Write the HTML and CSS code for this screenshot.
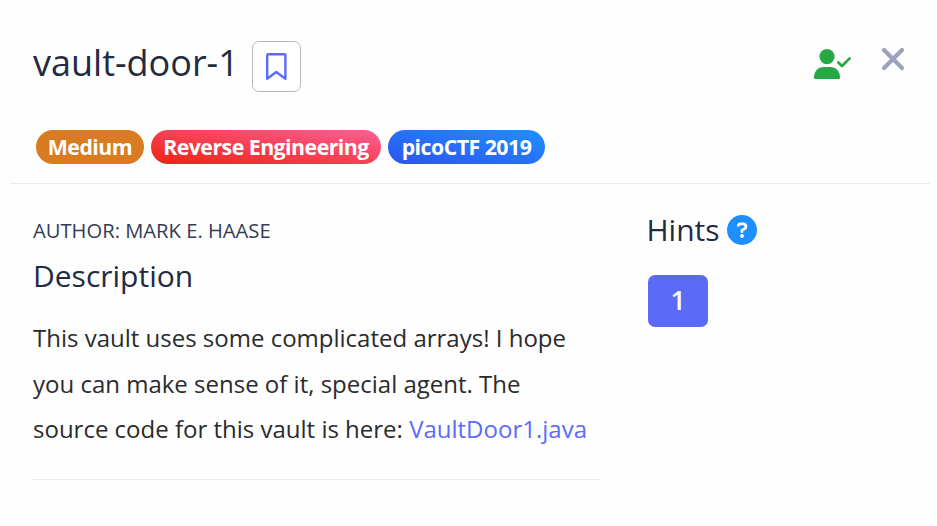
FILE: index.html
```html
<!DOCTYPE html>
<html lang="en">
<head>
<meta charset="utf-8">
<title>vault-door-1</title>
<link rel="stylesheet" href="styles.css">
</head>
<body>
<main class="modal">
  <header class="header">
    <div class="title-row">
      <h1 class="title">vault-door-1</h1>
      <button class="bookmark" aria-label="Bookmark">
        <svg width="21" height="27" viewBox="0 0 21 27"><path d="M1.200 25.800V2.200Q1.200 1.200 2.200 1.200h16.200q1 0 1 1v23.600l-9.100-6.800z" fill="none" stroke="#5b6cfa" stroke-width="2.400" stroke-linejoin="round"/></svg>
      </button>
      <svg class="solved" width="38" height="31" viewBox="0 0 38 31"><circle cx="13" cy="7.6" r="7.6" fill="#28a745"/><path d="M0 28.5C0 21 5 18 10 18h6c5 0 10 3 10 10.500q0 1.500-1.500 1.500h-23Q0 30 0 28.500z" fill="#28a745"/><path d="M24.300 13.500l3.700 3.500 7.600-7.600" fill="none" stroke="#28a745" stroke-width="2.700" stroke-linecap="round" stroke-linejoin="round"/></svg>
      <svg class="close" width="24" height="24" viewBox="0 0 24 24"><path d="M3 3l18 18M21 3L3 21" stroke="#9ca2bd" stroke-width="4.200" stroke-linecap="round"/></svg>
    </div>
    <div class="tags">
      <span class="tag medium">Medium</span>
      <span class="tag category">Reverse Engineering</span>
      <span class="tag event">picoCTF 2019</span>
    </div>
  </header>
  <div class="content">
    <section class="details">
      <p class="author">AUTHOR: MARK E. HAASE</p>
      <h2 class="heading">Description</h2>
      <p class="text">This vault uses some complicated arrays! I hope<br>you can make sense of it, special agent. The<br>source code for this vault is here: <a href="#">VaultDoor1.java</a></p>
    </section>
    <aside class="hints">
      <h2 class="hints-title">Hints
        <svg class="help" width="30" height="30" viewBox="0 0 30 30"><circle cx="15" cy="15" r="15" fill="#1e8fff"/><path d="M11.200 10.200Q11.800 8.800 13.800 8.800h2.400q2.700.2 2.700 2.700 0 1.500-1.500 2.400L15 15.300v1.400" fill="none" stroke="#fff" stroke-width="2.800" stroke-linecap="round" stroke-linejoin="round"/><circle cx="15" cy="21" r="1.900" fill="#fff"/></svg>
      </h2>
      <button class="hint">1</button>
    </aside>
  </div>
</main>
</body>
</html>
```
FILE: styles.css
```css
* { box-sizing: border-box; }
body { margin: 0; background: #fefefe; color: #2a2b2d; font-family: "Open Sans", sans-serif; }
h1, h2, p { margin: 0; font-weight: 400; }
.modal { height: 526px; overflow: hidden; }
.header { height: 184px; margin: 0 7px 0 10px; padding: 41px 26px 0 23px; border-bottom: 1px solid #e9eaec; }
.title-row { display: flex; height: 51px; }
.title { width: 219px; font-size: 36px; line-height: 44px; color: #222b42; white-space: nowrap; }
.bookmark { width: 49px; height: 51px; padding: 0; display: grid; place-items: center; background: #fff; border: 1px solid #b2b8c2; border-radius: 7px; }
.bookmark svg { display: block; }
.solved { margin: 8px 0 0 auto; }
.close { margin: 6px -1px 0 29px; }
.tags { display: flex; gap: 7px; margin: 38px 0 0 3px; }
.tag { height: 34px; border-radius: 17px; color: #fff; font-size: 21.3px; font-weight: 700; letter-spacing: -0.52px; line-height: 34px; text-align: center; white-space: nowrap; }
.medium { width: 108px; background: #d97b20; }
.category { width: 230px; background: linear-gradient(to top right, #ee2211, #ff6098); }
.event { width: 157px; background: linear-gradient(to top right, #2d53f2, #1e90fe); }
.content { display: flex; padding-left: 33px; }
.details { width: 568px; height: 296px; padding-top: 31px; border-bottom: 1px solid #e9eaec; }
.author { font-size: 20.2px; line-height: 30px; color: #343b55; white-space: nowrap; }
.heading { margin-top: 11px; font-size: 30px; line-height: 40px; color: #222b42; }
.text { margin-top: 19px; font-size: 24px; line-height: 45.6px; white-space: nowrap; }
.text a { color: #5b6cfa; text-decoration: none; }
.hints { padding: 26px 0 0 45.5px; }
.hints-title { display: flex; gap: 7px; align-items: center; font-size: 30px; line-height: 40px; color: #222b42; }
.hint { display: block; width: 60px; height: 52px; margin: 25px 0 0 1.5px; padding: 0 0 2px; border: 0; border-radius: 7px; background: #5b6af7; color: #fff; font: 650 26.5px "Open Sans", sans-serif; }
```
